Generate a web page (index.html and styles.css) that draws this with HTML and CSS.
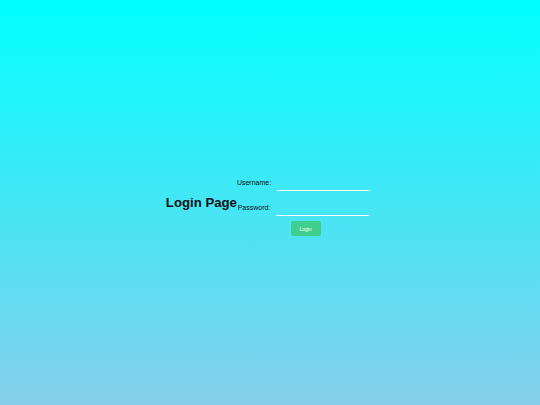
FILE: index.html
```html
<!DOCTYPE html>
<html>
<head>
<meta charset="utf-8">
<title>Login Page</title>
<link rel="stylesheet" href="styles.css">
</head>
<body>
<div class="wrap">
  <h1 class="title">Login Page</h1>
  <form class="form">
    <div class="row">
      <label class="label" for="u">Username:</label>
      <input class="input" id="u" type="text">
    </div>
    <div class="row row-last">
      <label class="label" for="p">Password:</label>
      <input class="input" id="p" type="password">
    </div>
    <div class="actions">
      <button class="btn" type="button">Login</button>
    </div>
  </form>
</div>
</body>
</html>
```
FILE: styles.css
```css
html, body {
  height: 100%;
}
body {
  margin: 0;
  background: linear-gradient(to bottom, #00ffff, #87ceeb);
  font-family: "Liberation Sans", Arial, sans-serif;
  color: #111;
  display: flex;
  justify-content: center;
  align-items: center;
}
.wrap {
  display: flex;
  align-items: center;
  margin-right: 4px;
}
.title {
  margin: 0;
  font-size: 13.2px;
  font-weight: bold;
  color: #111;
}
.form {
  margin: 0;
  padding-top: 8px;
}
.row {
  display: flex;
  justify-content: center;
  align-items: baseline;
  gap: 6px;
  margin-bottom: 11px;
}
.row-last {
  margin-bottom: 1px;
}
.label {
  font-size: 7px;
  color: #111;
}
.input {
  font-size: 7px;
  font-family: inherit;
  width: 93px;
  box-sizing: border-box;
  padding: 2px 2px 4px;
  border: 0;
  border-bottom: 1px solid #fff;
  background: transparent;
  outline: none;
}
.actions {
  text-align: center;
  padding-left: 4px;
}
.btn {
  width: 30px;
  height: 15px;
  padding: 0;
  border: 0;
  border-radius: 2px;
  background: #3ecf8e;
  color: #fff;
  font-family: inherit;
  font-size: 5px;
}
```
